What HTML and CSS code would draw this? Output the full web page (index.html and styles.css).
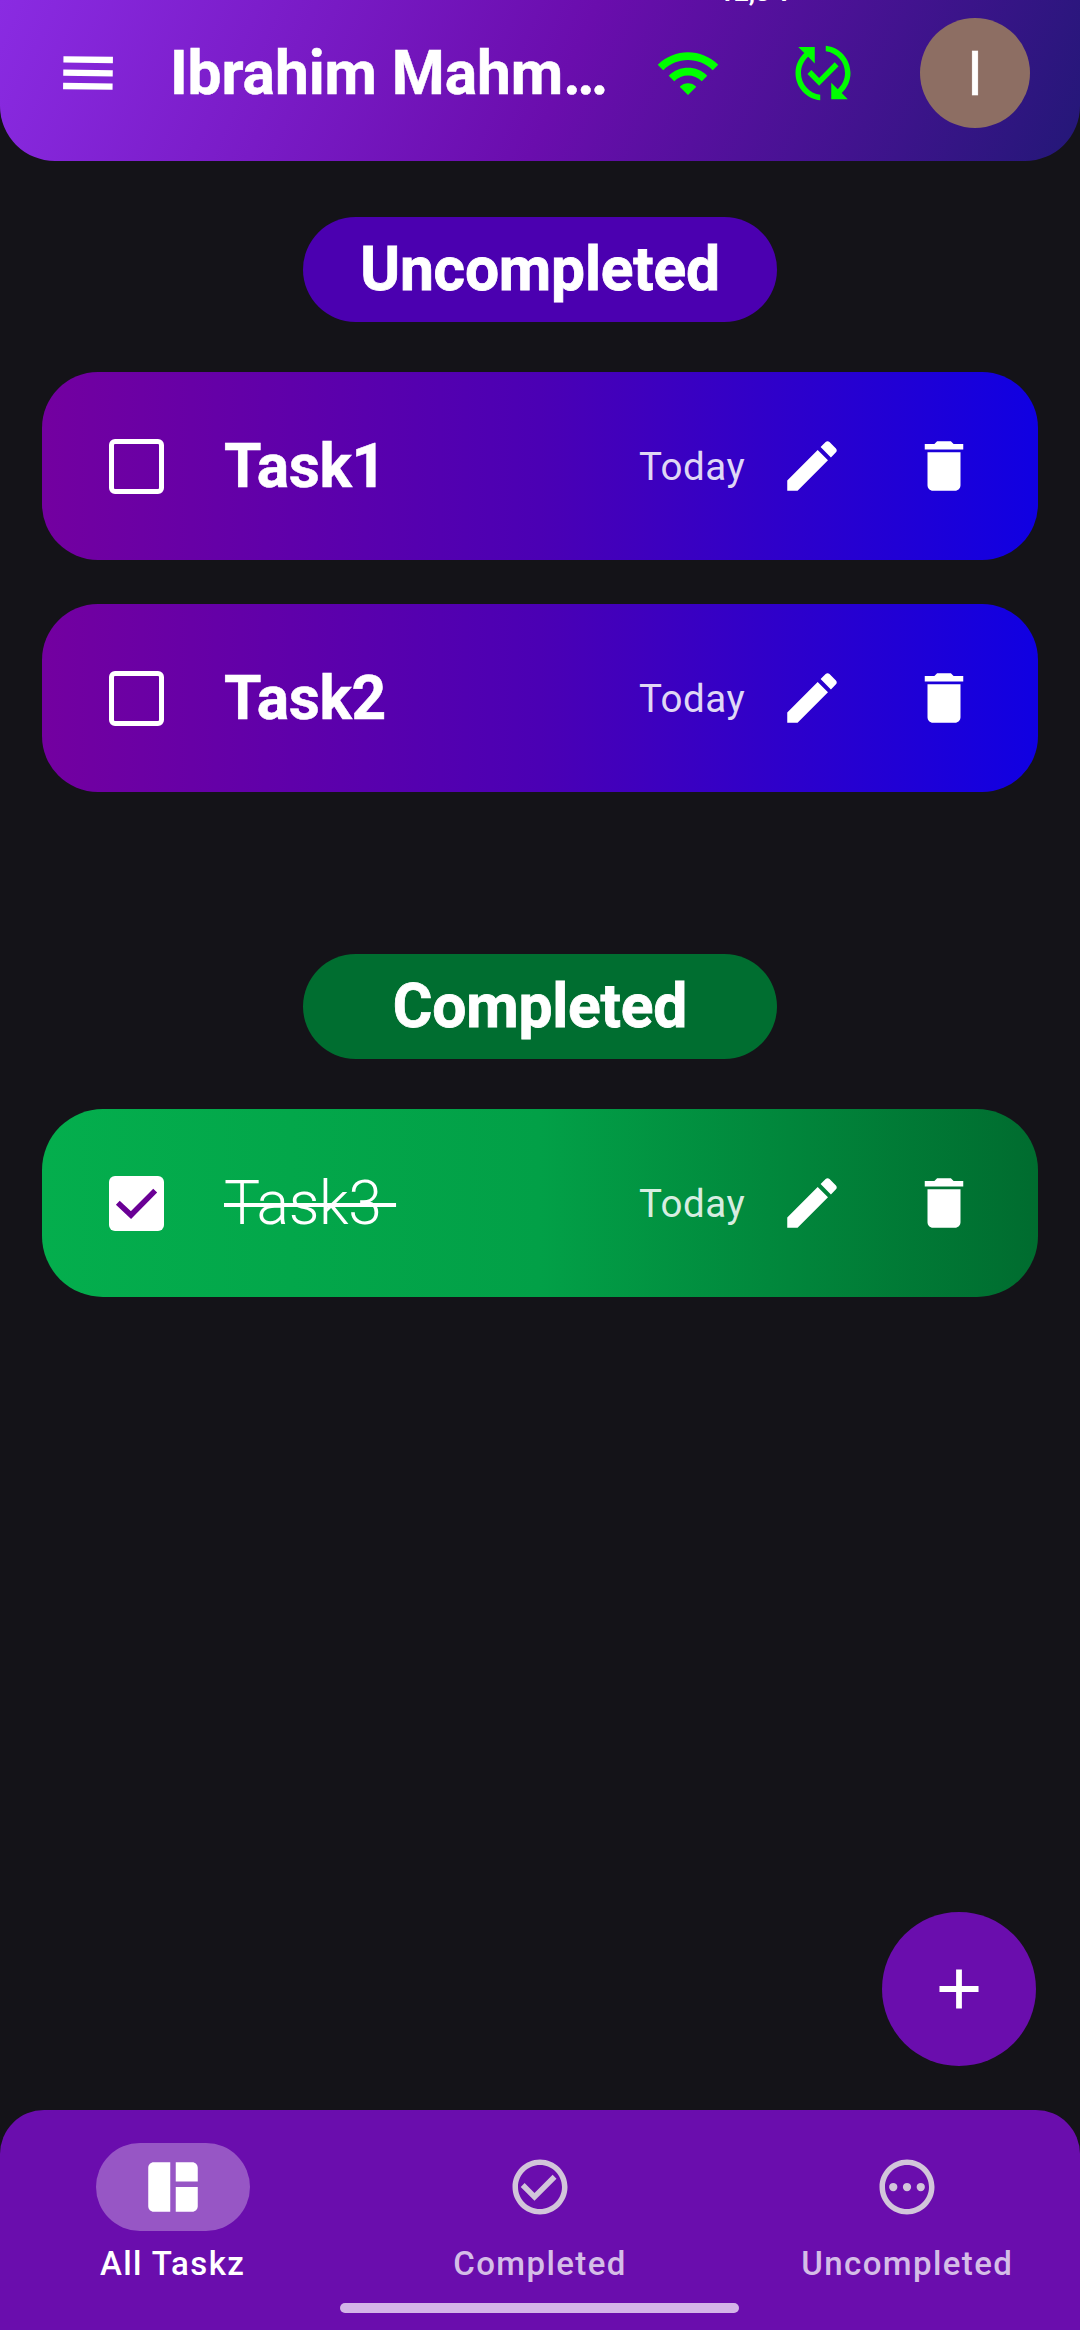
FILE: index.html
```html
<!DOCTYPE html>
<html lang="en">
<head>
<meta charset="utf-8">
<title>All Taskz</title>
<link rel="stylesheet" href="styles.css">
</head>
<body>
<svg class="sprite" aria-hidden="true">
  <symbol id="edit" viewBox="0 0 24 24"><path d="M3 17.25V21h3.75L17.81 9.94l-3.75-3.75L3 17.25zM20.71 7.04c.39-.39.39-1.02 0-1.41l-2.34-2.34c-.39-.39-1.02-.39-1.41 0l-1.83 1.83 3.75 3.75 1.83-1.83z"/></symbol>
  <symbol id="delete" viewBox="0 0 24 24"><path d="M6 19c0 1.1.9 2 2 2h8c1.1 0 2-.9 2-2V7H6v12zM19 4h-3.5l-1-1h-5l-1 1H5v2h14V4z"/></symbol>
</svg>
<div class="screen">
  <header class="topbar">
    <div class="status">12,3 T</div>
    <svg class="icon menu" viewBox="0 0 24 24"><path d="M3 18h18v-2.300H3V18zm0-4.850h18v-2.300H3v2.300zM3 6v2.300h18V6H3z"/></svg>
    <h1 class="title">Ibrahim Mahm…</h1>
    <svg class="icon wifi" viewBox="0 0 24 24"><path d="M1 9l2 2c4.970-4.970 13.030-4.970 18 0l2-2C16.930 2.930 7.080 2.930 1 9zm8 8l3 3 3-3c-1.650-1.660-4.340-1.660-6 0zm-4-4l2 2c2.760-2.760 7.240-2.760 10 0l2-2C15.140 9.140 8.870 9.140 5 13z"/></svg>
    <svg class="icon sync" viewBox="0 0 24 24"><path d="M17.660 9.530l-7.070 7.070-4.240-4.240 1.410-1.410 2.830 2.830 5.660-5.660 1.410 1.410zM4 12c0-2.330 1.020-4.420 2.620-5.880L9 8.500v-6H3l2.200 2.200C3.240 6.520 2 9.110 2 12c0 5.190 3.950 9.450 9 9.950v-2.020c-3.940-.49-7-3.860-7-7.930zm18 0c0-5.190-3.950-9.450-9-9.950v2.020c3.940.49 7 3.860 7 7.930 0 2.330-1.020 4.420-2.620 5.880L15 15.500v6h6l-2.200-2.200c1.960-1.820 3.200-4.410 3.200-7.300z"/></svg>
    <div class="avatar">I</div>
  </header>
  <main class="content">
    <section class="group">
      <h2 class="pill">Uncompleted</h2>
      <article class="card">
        <span class="box"></span>
        <span class="name">Task1</span>
        <span class="date">Today</span>
        <svg class="icon"><use href="#edit"/></svg>
        <svg class="icon trash"><use href="#delete"/></svg>
      </article>
      <article class="card">
        <span class="box"></span>
        <span class="name">Task2</span>
        <span class="date">Today</span>
        <svg class="icon"><use href="#edit"/></svg>
        <svg class="icon trash"><use href="#delete"/></svg>
      </article>
    </section>
    <section class="group done">
      <h2 class="pill">Completed</h2>
      <article class="card">
        <span class="box"><svg class="tick" viewBox="0 0 20 20"><path d="M3.200 9.700l4.800 4.500 8.800-8.900"/></svg></span>
        <span class="name">Task3 </span>
        <span class="date">Today</span>
        <svg class="icon"><use href="#edit"/></svg>
        <svg class="icon trash"><use href="#delete"/></svg>
      </article>
    </section>
    <button class="fab"><svg class="icon" viewBox="0 0 24 24"><path d="M19.100 13.050h-6.050v6.050h-2.100v-6.050H4.900v-2.100h6.050V4.900h2.100v6.050h6.050z"/></svg></button>
  </main>
  <nav class="bottom">
    <div class="tabs">
      <div class="tab active">
        <span class="mark"><svg class="icon" viewBox="0 0 24 24"><path d="M11 21H5c-1.100 0-2-.9-2-2V5c0-1.100.9-2 2-2h6v18zm2 0h6c1.100 0 2-.9 2-2v-7h-8v9zm8-11V5c0-1.100-.9-2-2-2h-6v7h8z"/></svg></span>
        <span class="label">All Taskz</span>
      </div>
      <div class="tab">
        <span class="mark"><svg class="icon" viewBox="0 0 24 24"><path d="M16.590 7.580L10 14.170l-3.590-3.580L5 12l5 5 8-8zM12 2C6.480 2 2 6.480 2 12s4.480 10 10 10 10-4.480 10-10S17.520 2 12 2zm0 18c-4.420 0-8-3.580-8-8s3.580-8 8-8 8 3.580 8 8-3.580 8-8 8z"/></svg></span>
        <span class="label">Completed</span>
      </div>
      <div class="tab">
        <span class="mark"><svg class="icon" viewBox="0 0 24 24"><path d="M12 2C6.480 2 2 6.480 2 12s4.480 10 10 10 10-4.480 10-10S17.520 2 12 2zm0 18c-4.420 0-8-3.580-8-8s3.580-8 8-8 8 3.580 8 8-3.580 8-8 8z"/><circle cx="7" cy="12" r="1.500"/><circle cx="12" cy="12" r="1.500"/><circle cx="17" cy="12" r="1.500"/></svg></span>
        <span class="label">Uncompleted</span>
      </div>
    </div>
    <div class="handle"></div>
  </nav>
</div>
</body>
</html>
```
FILE: styles.css
```css
* { box-sizing: border-box; }
body {
  margin: 0;
  background: #141318;
  color: #fff;
  font-family: Roboto, "Liberation Sans", sans-serif;
}
.sprite { display: none; }
.screen {
  width: 1080px;
  height: 2330px;
  display: flex;
  flex-direction: column;
  overflow: hidden;
}
.icon {
  display: block;
  flex: none;
  width: 66px;
  height: 66px;
  fill: currentColor;
}

.topbar {
  position: relative;
  flex: none;
  height: 161px;
  padding: 0 50px 15px 55px;
  display: flex;
  align-items: center;
  border-radius: 0 0 55px 55px;
  background: linear-gradient(114deg, #8a2be2 0%, #6a0dad 52%, #191970 107%);
}
.status {
  position: absolute;
  left: 719px;
  top: -23px;
  font-size: 26px;
  line-height: 30px;
  font-weight: 700;
}
.menu { transform: rotate(0.7deg); }
.title {
  margin: 2px 0 0 49px;
  width: 485px;
  font-size: 60.5px;
  line-height: 76px;
  font-weight: 700;
  letter-spacing: -0.1px;
  -webkit-text-stroke: 0.5px #fff;
  white-space: nowrap;
}
.wifi, .sync { color: #0f0; }
.sync { margin-left: 69px; }
.avatar {
  margin-left: auto;
  width: 110px;
  height: 110px;
  border-radius: 50%;
  background: #8d6e63;
  display: flex;
  align-items: center;
  justify-content: center;
  padding-top: 2px;
  font-size: 60.5px;
  font-weight: 400;
  -webkit-text-stroke: 0.4px #fff;
}

.content {
  flex: 1;
  min-height: 0;
  display: flex;
  flex-direction: column;
  padding: 56px 42px 44px;
}
.group {
  display: flex;
  flex-direction: column;
  align-items: center;
}
.done { margin-top: 162px; }
.pill {
  margin: 0 0 50px;
  width: 474px;
  height: 105px;
  border-radius: 53px;
  background: #4b00b0;
  display: flex;
  align-items: center;
  justify-content: center;
  font-size: 60.5px;
  font-weight: 700;
  letter-spacing: -0.2px;
  -webkit-text-stroke: 0.8px #fff;
}
.done .pill { background: #006e30; }
.card {
  width: 996px;
  height: 188px;
  padding: 0 61px 0 67px;
  border-radius: 56px;
  display: flex;
  align-items: center;
  background: linear-gradient(90deg, #7300a0, #4b00b4 50%, #1000e2);
}
.card + .card { margin-top: 44px; }
.done .card {
  border-radius: 61px;
  background: linear-gradient(90deg, #04ae4d, #02a047 50%, #006c2f);
}
.box {
  width: 55px;
  height: 55px;
  border: 5px solid #fff;
  border-radius: 6px;
}
.done .box {
  border: 0;
  background: #fff;
}
.tick {
  display: block;
  width: 55px;
  height: 55px;
  fill: none;
  stroke: #6a0095;
  stroke-width: 2;
}
.name {
  margin-left: 60px;
  width: 415px;
  font-size: 60.5px;
  font-weight: 700;
  letter-spacing: -0.3px;
  white-space: pre;
  -webkit-text-stroke: 0.5px #fff;
}
.done .name {
  font-weight: 300;
  -webkit-text-stroke: 0;
  text-decoration: line-through;
  text-decoration-thickness: 4px;
}
.date {
  width: 140px;
  font-size: 38.5px;
  letter-spacing: 0.5px;
  color: rgba(255, 255, 255, 0.86);
}
.trash { margin-left: auto; }

.fab {
  margin: auto 2px 0 auto;
  width: 154px;
  height: 154px;
  padding: 0;
  border: 0;
  border-radius: 50%;
  background: #6a0dad;
  color: #fff;
  display: flex;
  align-items: center;
  justify-content: center;
}

.bottom {
  flex: none;
  height: 220px;
  padding-top: 33px;
  border-radius: 44px 44px 0 0;
  background: #6a0dad;
}
.tabs {
  display: flex;
  gap: 22px;
}
.tab {
  flex: 1;
  display: flex;
  flex-direction: column;
  align-items: center;
  color: #d2c5da;
}
.mark {
  width: 154px;
  height: 88px;
  border-radius: 44px;
  display: flex;
  align-items: center;
  justify-content: center;
}
.label {
  margin-top: 11px;
  font-size: 33px;
  line-height: 44px;
  font-weight: 500;
  letter-spacing: 1.4px;
  color: #d5bde7;
}
.active { color: #fff; }
.active .mark { background: rgba(255, 255, 255, 0.3); }
.active .label { color: #fff; }
.handle {
  width: 399px;
  height: 10px;
  margin: 17px 0 0 340px;
  border-radius: 5px;
  background: #d4b4e8;
}
```
